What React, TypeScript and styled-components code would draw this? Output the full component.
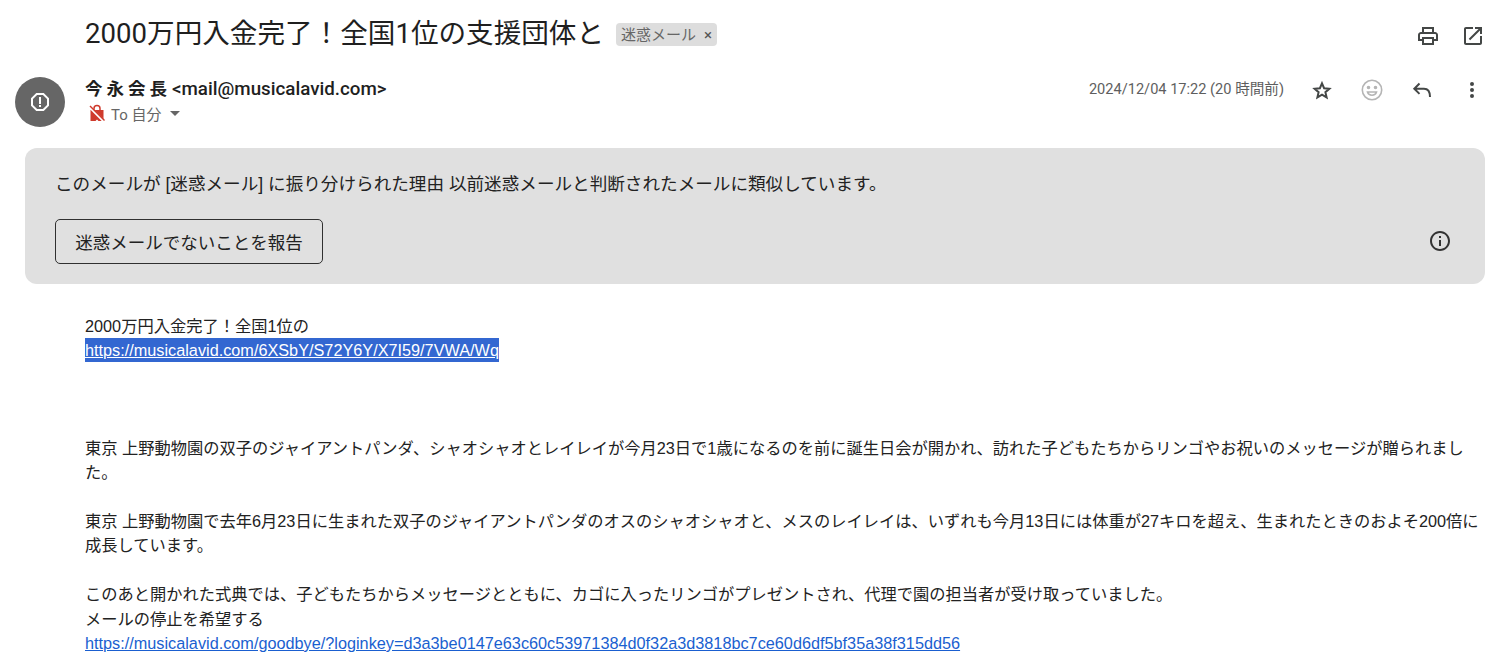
import * as React from 'react';
import styled, { createGlobalStyle } from 'styled-components';

const CJK = '"Noto Sans CJK JP", sans-serif';

const Global = createGlobalStyle`
  html, body {
    margin: 0;
    padding: 0;
    background: #ffffff;
    overflow: hidden;
  }
`;

const Page = styled.div`
  width: 1485px;
  height: 665px;
  overflow: hidden;
  color: #222222;
  font-family: "Liberation Sans", ${CJK};
`;

const SubjectRow = styled.div`
  display: flex;
  align-items: center;
  height: 46px;
  padding: 10px 0 0 85px;
`;

const Subject = styled.h1`
  margin: 2px 0 0;
  font-family: Roboto, ${CJK};
  font-size: 27.6px;
  font-weight: 400;
  line-height: 46px;
  color: #1f1f1f;
`;

const SpamChip = styled.span`
  display: flex;
  align-items: center;
  gap: 5px;
  height: 23px;
  margin: 3px 0 0 12px;
  padding: 0 5px;
  border-radius: 4px;
  background: #dddddd;
  color: #666666;
  font-family: Roboto, ${CJK};
  font-size: 15px;
  line-height: 22px;
`;

const ChipClose = styled.span`
  margin-left: 3px;
  font-size: 15px;
  color: #555555;
`;

const IconRow = styled.div<{ $gap: number }>`
  display: flex;
  align-items: center;
  gap: ${p => p.$gap}px;
  margin: 6px 0 0 auto;
`;

const Icon = styled.svg<{ $color?: string }>`
  display: block;
  width: 24px;
  height: 24px;
  fill: ${p => p.$color || '#444746'};
`;

const StrokeIcon = styled.svg<{ $color?: string; $weight?: number }>`
  display: block;
  width: 24px;
  height: 24px;
  fill: none;
  stroke: ${p => p.$color || '#444746'};
  stroke-width: ${p => p.$weight || 2};
`;

const SenderRow = styled.div`
  display: flex;
  align-items: flex-start;
  height: 73px;
  margin-top: 19px;
  padding-left: 15px;
`;

const Avatar = styled.div`
  display: flex;
  align-items: center;
  justify-content: center;
  flex: none;
  width: 50px;
  height: 50px;
  margin-top: 2px;
  border-radius: 50%;
  background: #666666;
`;

const SenderInfo = styled.div`
  display: flex;
  flex-direction: column;
  margin-left: 20px;
`;

const SenderLine = styled.div`
  display: flex;
  align-items: baseline;
  gap: 5px;
  height: 24px;
  font-family: Roboto, ${CJK};
  font-weight: 700;
  color: #1f1f1f;
`;

const SenderName = styled.span`
  font-size: 17.5px;
  letter-spacing: 4px;
  margin-right: -4px;
`;

const SenderMail = styled.span`
  font-size: 18.75px;
  font-weight: 500;
`;

const ToLine = styled.div`
  display: flex;
  align-items: center;
  height: 24px;
  margin-top: 2px;
  color: #666666;
  font-family: Roboto, ${CJK};
  font-size: 15px;
`;

const Caret = styled.span`
  width: 0;
  height: 0;
  margin-left: 8px;
  border-left: 5px solid transparent;
  border-right: 5px solid transparent;
  border-top: 5px solid #666666;
`;

const ToIcon = styled.svg`
  display: block;
  width: 16px;
  height: 18px;
  margin: 0 6px 0 4px;
`;

const DateText = styled.span`
  margin-bottom: 5px;
  color: #5e5e5e;
  font-family: Roboto, ${CJK};
  font-size: 14.6px;
`;

const SenderActions = styled.div`
  display: flex;
  align-items: center;
  height: 26px;
  margin: 2px 0 0 auto;
  padding-right: 1px;
`;

const ActionSlot = styled.span`
  display: block;
  margin-left: 26px;
`;

const SpamCard = styled.section`
  display: flex;
  flex-direction: column;
  align-items: flex-start;
  position: relative;
  box-sizing: border-box;
  height: 136px;
  margin-left: 25px;
  padding: 24px 30px 0;
  border-radius: 12px;
  background: #e0e0e0;
`;

const CardText = styled.p`
  margin: 0;
  font-family: "Liberation Sans", ${CJK};
  font-size: 17.6px;
  line-height: 24px;
  color: #222222;
`;

const ReportButton = styled.button`
  box-sizing: border-box;
  width: 268px;
  height: 45px;
  margin-top: 23px;
  padding: 0;
  border: 1px solid #303030;
  border-radius: 5px;
  background: transparent;
  color: #222222;
  font-family: "Liberation Sans", ${CJK};
  font-size: 17.5px;
`;

const CardInfo = styled.div`
  position: absolute;
  top: 81px;
  right: 33px;
`;

const Body = styled.div`
  margin-left: 85px;
  padding-top: 30px;
  width: 1396px;
  font-size: 16.25px;
  line-height: 24.4px;
  color: #222222;
`;

const BodyLine = styled.div<{ $gap?: number }>`
  margin-top: ${p => p.$gap || 0}px;
`;

const Link = styled.a`
  color: #1a5fd0;
  text-decoration: underline;
`;

const SelectedLink = styled(Link)`
  display: inline-block;
  height: 24px;
  line-height: 24px;
  background: #3367d1;
  color: #ffffff;
  vertical-align: top;
`;

const paths = {
  print:
    'M19 8h-1V3H6v5H5c-1.66 0-3 1.34-3 3v6h4v4h12v-4h4v-6c0-1.66-1.34-3-3-3zM8 5h8v3H8V5zm8 12v2H8v-4h8v2zm2-2v-2H6v2H4v-4c0-.55.45-1 1-1h14c.55 0 1 .45 1 1v4h-2z',
  open:
    'M19 19H5V5h7V3H5c-1.11 0-2 .9-2 2v14c0 1.1.89 2 2 2h14c1.1 0 2-.9 2-2v-7h-2v7zM14 3v2h3.59l-9.83 9.83 1.41 1.41L19 6.41V10h2V3h-7z',
  more:
    'M12 8a2 2 0 1 0 0-4 2 2 0 0 0 0 4zm0 2a2 2 0 1 0 0 4 2 2 0 0 0 0-4zm0 6a2 2 0 1 0 0 4 2 2 0 0 0 0-4z',
  info:
    'M11 7h2v2h-2zm0 4h2v6h-2zm1-9C6.480 2 2 6.480 2 12s4.480 10 10 10 10-4.480 10-10S17.520 2 12 2zm0 18c-4.410 0-8-3.590-8-8s3.590-8 8-8 8 3.590 8 8-3.590 8-8 8z',
};

const Glyph = ({ d, color }: { d: string; color?: string }) => (
  <Icon viewBox='0 0 24 24' $color={color}>
    <path d={d} />
  </Icon>
);

export default function App() {
  return (
    <Page>
      <Global />
      <SubjectRow>
        <Subject>2000万円入金完了！全国1位の支援団体と</Subject>
        <SpamChip>
          迷惑メール<ChipClose>×</ChipClose>
        </SpamChip>
        <IconRow $gap={21}>
          <Glyph d={paths.print} />
          <Glyph d={paths.open} />
        </IconRow>
      </SubjectRow>

      <SenderRow>
        <Avatar>
          <svg width='24' height='24' viewBox='0 0 24 24' fill='#ffffff'>
            <path d='M15.730 3H8.270L3 8.270v7.460L8.270 21h7.460L21 15.730V8.270L15.730 3zM19 14.900L14.900 19H9.100L5 14.900V9.100L9.100 5h5.800L19 9.100v5.800z' />
            <path d='M11 7h2v7h-2zM11 15h2v2h-2z' />
          </svg>
        </Avatar>
        <SenderInfo>
          <SenderLine>
            <SenderName>今永会長</SenderName>
            <SenderMail>&lt;mail@musicalavid.com&gt;</SenderMail>
          </SenderLine>
          <ToLine>
            <ToIcon viewBox='0 0 16 18'>
              <path d='M5 6V4.500a3 3 0 0 1 6 0V6' fill='none' stroke='#cf3a2c' strokeWidth='1.500' />
              <path d='M1.500 6h13v11H9.500L8 15.500 6.500 17h-5z' fill='#cf3a2c' />
              <path d='M0.500 3L15 17.500' stroke='#ffffff' strokeWidth='2.600' />
              <path d='M1 2L15.500 16.500' stroke='#cf3a2c' strokeWidth='1.400' />
            </ToIcon>
            To 自分
            <Caret />
          </ToLine>
        </SenderInfo>
        <SenderActions>
          <DateText>2024/12/04 17:22 (20 時間前)</DateText>
          <ActionSlot>
            <StrokeIcon viewBox='0 0 24 24'>
              <path d='M12 5.300l2.100 4.900 5.300.5-4 3.500 1.200 5.200-4.600-2.800-4.600 2.800 1.200-5.200-4-3.500 5.300-.5z' />
            </StrokeIcon>
          </ActionSlot>
          <ActionSlot>
            <StrokeIcon viewBox='0 0 24 24' $color='#b5b5b5' $weight={1.6}>
              <circle cx='12' cy='12' r='9.700' />
              <circle cx='8.500' cy='9.500' r='1' fill='#b5b5b5' />
              <circle cx='15.500' cy='9.500' r='1' fill='#b5b5b5' />
              <path d='M7.500 14h9c-.6 2-2.400 3.200-4.500 3.200S8.100 16 7.500 14z' />
            </StrokeIcon>
          </ActionSlot>
          <ActionSlot>
            <StrokeIcon viewBox='0 0 24 24'>
              <path d='M9.500 5.500L4.300 10.700l5.200 5.200M4.300 10.700H14c3.900 0 6 3 6 8.300' />
            </StrokeIcon>
          </ActionSlot>
          <ActionSlot>
            <Glyph d={paths.more} />
          </ActionSlot>
        </SenderActions>
      </SenderRow>

      <SpamCard>
        <CardText>
          このメールが [迷惑メール] に振り分けられた理由 以前迷惑メールと判断されたメールに類似しています。
        </CardText>
        <ReportButton>迷惑メールでないことを報告</ReportButton>
        <CardInfo>
          <Glyph d={paths.info} color='#333333' />
        </CardInfo>
      </SpamCard>

      <Body>
        <BodyLine>2000万円入金完了！全国1位の</BodyLine>
        <BodyLine>
          <SelectedLink href='#'>https://musicalavid.com/6XSbY/S72Y6Y/X7I59/7VWA/Wq</SelectedLink>
        </BodyLine>
        <BodyLine $gap={73}>
          東京 上野動物園の双子のジャイアントパンダ、シャオシャオとレイレイが今月23日で1歳になるのを前に誕生日会が開かれ、訪れた子どもたちからリンゴやお祝いのメッセージが贈られました。
        </BodyLine>
        <BodyLine $gap={24.4}>
          東京 上野動物園で去年6月23日に生まれた双子のジャイアントパンダのオスのシャオシャオと、メスのレイレイは、いずれも今月13日には体重が27キロを超え、生まれたときのおよそ200倍に成長しています。
        </BodyLine>
        <BodyLine $gap={24.4}>
          このあと開かれた式典では、子どもたちからメッセージとともに、カゴに入ったリンゴがプレゼントされ、代理で園の担当者が受け取っていました。
        </BodyLine>
        <BodyLine>メールの停止を希望する</BodyLine>
        <BodyLine>
          <Link href='#'>
            https://musicalavid.com/goodbye/?loginkey=d3a3be0147e63c60c53971384d0f32a3d3818bc7ce60d6df5bf35a38f315dd56
          </Link>
        </BodyLine>
      </Body>
    </Page>
  );
}
